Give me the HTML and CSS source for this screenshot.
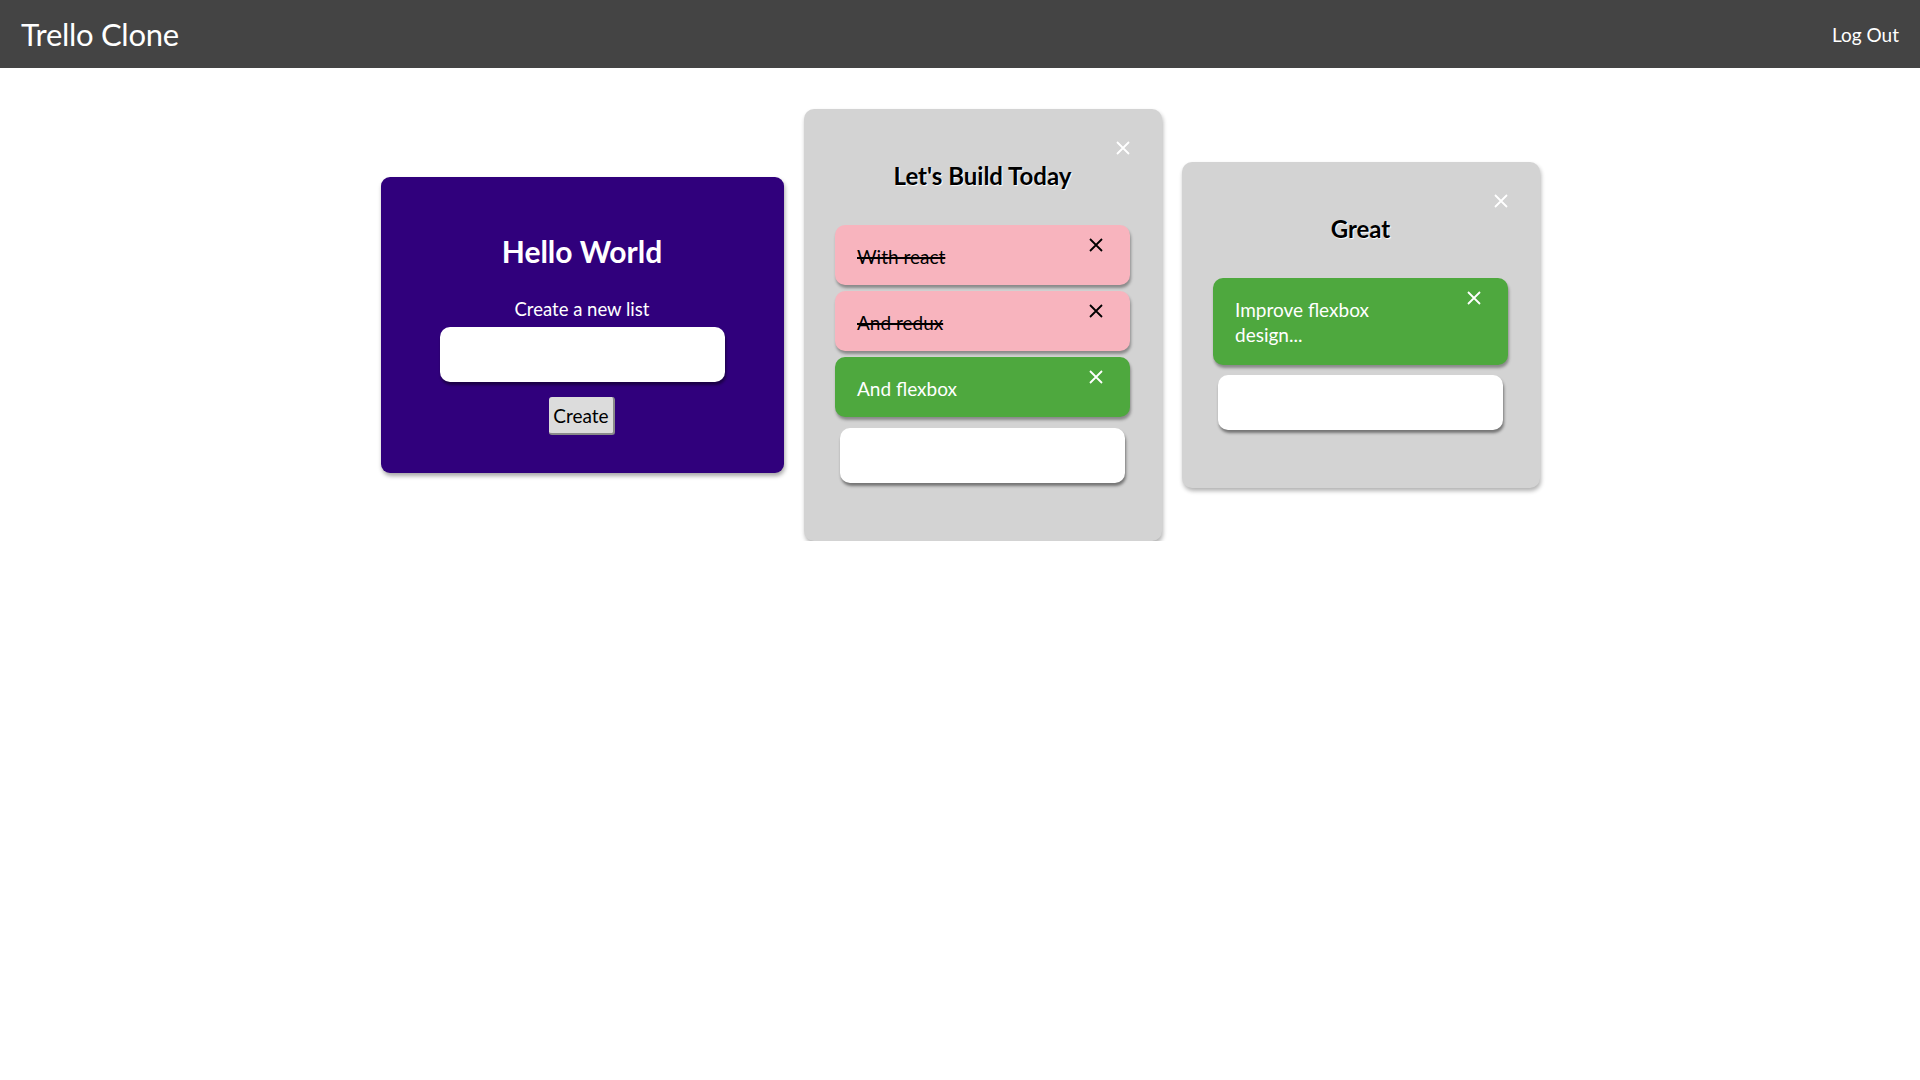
FILE: index.html
```html
<!DOCTYPE html>
<html lang="en">
<head>
<meta charset="utf-8">
<title>Trello Clone</title>
<link rel="stylesheet" href="styles.css">
</head>
<body>
<header class="topbar">
  <div class="brand">Trello Clone</div>
  <a class="logout" href="#">Log Out</a>
</header>
<main class="board">
  <section class="new-list">
    <h1 class="new-title">Hello World</h1>
    <label class="new-label">Create a new list</label>
    <input class="text-input" type="text">
    <button class="create-btn">Create</button>
  </section>

  <section class="list list-tall">
    <button class="list-close" aria-label="Delete list">
      <svg viewBox="0 0 14 14" width="14" height="14"><path d="M1 1 L13 13 M13 1 L1 13" stroke="#fff" stroke-width="1.8" fill="none"/></svg>
    </button>
    <h2 class="list-title">Let's Build Today</h2>
    <div class="cards">
      <div class="card card-done">
        <span class="card-text">With react</span>
        <button class="card-close" aria-label="Delete card"><svg viewBox="0 0 14 14" width="14" height="14"><path d="M1 1 L13 13 M13 1 L1 13" stroke="#000" stroke-width="1.8" fill="none"/></svg></button>
      </div>
      <div class="card card-done">
        <span class="card-text">And redux</span>
        <button class="card-close" aria-label="Delete card"><svg viewBox="0 0 14 14" width="14" height="14"><path d="M1 1 L13 13 M13 1 L1 13" stroke="#000" stroke-width="1.8" fill="none"/></svg></button>
      </div>
      <div class="card card-todo">
        <span class="card-text">And flexbox</span>
        <button class="card-close" aria-label="Delete card"><svg viewBox="0 0 14 14" width="14" height="14"><path d="M1 1 L13 13 M13 1 L1 13" stroke="#fff" stroke-width="1.8" fill="none"/></svg></button>
      </div>
    </div>
    <input class="text-input list-input" type="text">
  </section>

  <section class="list list-short">
    <button class="list-close" aria-label="Delete list">
      <svg viewBox="0 0 14 14" width="14" height="14"><path d="M1 1 L13 13 M13 1 L1 13" stroke="#fff" stroke-width="1.8" fill="none"/></svg>
    </button>
    <h2 class="list-title">Great</h2>
    <div class="cards">
      <div class="card card-todo card-wrap">
        <span class="card-text">Improve flexbox design...</span>
        <button class="card-close" aria-label="Delete card"><svg viewBox="0 0 14 14" width="14" height="14"><path d="M1 1 L13 13 M13 1 L1 13" stroke="#fff" stroke-width="1.8" fill="none"/></svg></button>
      </div>
    </div>
    <input class="text-input list-input" type="text">
  </section>
</main>
</body>
</html>
```
FILE: styles.css
```css
* { box-sizing: border-box; }
html, body { margin: 0; padding: 0; background: #fff; }
body { font-family: Lato, "Open Sans", sans-serif; color: #000; }

.topbar {
  height: 68px;
  background: #444444;
  display: flex;
  align-items: center;
  justify-content: space-between;
  padding: 0 21px 0 21px;
  color: #fff;
}
.brand { font-size: 31px; font-weight: 400; letter-spacing: -0.3px; }
.logout { color: #fff; text-decoration: none; font-size: 19px; }

.board {
  display: flex;
  justify-content: center;
  align-items: center;
  gap: 20px;
  padding-top: 41px;
}

.new-list {
  width: 403px;
  height: 296px;
  background: #30007c;
  border-radius: 9px;
  box-shadow: 1px 3px 4px rgba(0,0,0,0.35);
  display: flex;
  flex-direction: column;
  align-items: center;
  color: #fff;
  padding-top: 54px;
}
.new-title { margin: 0; font-size: 30px; font-weight: 700; line-height: 40px; }
.new-label { margin-top: 26px; font-size: 18.5px; line-height: 24px; }
.text-input {
  width: 285px;
  height: 55px;
  border: none;
  border-radius: 10px;
  background: #fff;
  box-shadow: 1px 3px 3px rgba(0,0,0,0.45);
  outline: none;
}
.new-list .text-input { margin-top: 6px; }
.create-btn {
  margin-top: 15px;
  width: 66px;
  height: 38px;
  padding: 0;
  background: #dcdcdc;
  border: none;
  border-right: 2px solid #8a8a8a;
  border-bottom: 2px solid #8a8a8a;
  border-radius: 3px;
  font-family: Lato, "Open Sans", sans-serif;
  font-size: 19px;
  color: #000;
}

.list {
  position: relative;
  width: 358px;
  background: #d3d3d3;
  border-radius: 10px;
  box-shadow: 1px 3px 4px rgba(0,0,0,0.3);
  display: flex;
  flex-direction: column;
  align-items: center;
  padding: 52px 0 58px;
}
.list-close {
  position: absolute;
  top: 32px;
  right: 32px;
  width: 14px;
  height: 14px;
  padding: 0;
  border: none;
  background: none;
  display: flex;
}
.list-title {
  margin: 0;
  font-size: 24px;
  font-weight: 700;
  line-height: 30px;
  text-shadow: 1px 1px 1px #fff;
}
.cards {
  margin-top: 34px;
  display: flex;
  flex-direction: column;
  gap: 6px;
  width: 295px;
}
.card {
  position: relative;
  height: 60px;
  border-radius: 10px;
  box-shadow: 1px 3px 3px rgba(0,0,0,0.35);
  display: flex;
  align-items: center;
  padding: 3px 22px 0;
  font-size: 19px;
}
.card-done { background: #f8b4be; color: #000; }
.card-done .card-text { text-decoration: line-through; text-decoration-thickness: 2px; }
.card-todo { background: #4ea83e; color: #fff; }
.card-wrap { height: 87px; padding-top: 0; align-items: center; }
.card-wrap .card-text { width: 150px; line-height: 25px; padding-top: 0; }
.card-close {
  position: absolute;
  top: 13px;
  right: 27px;
  width: 14px;
  height: 14px;
  padding: 0;
  border: none;
  background: none;
  display: flex;
}
.list-input { margin-top: 11px; }
.list-short .list-input { margin-top: 10px; }
```
